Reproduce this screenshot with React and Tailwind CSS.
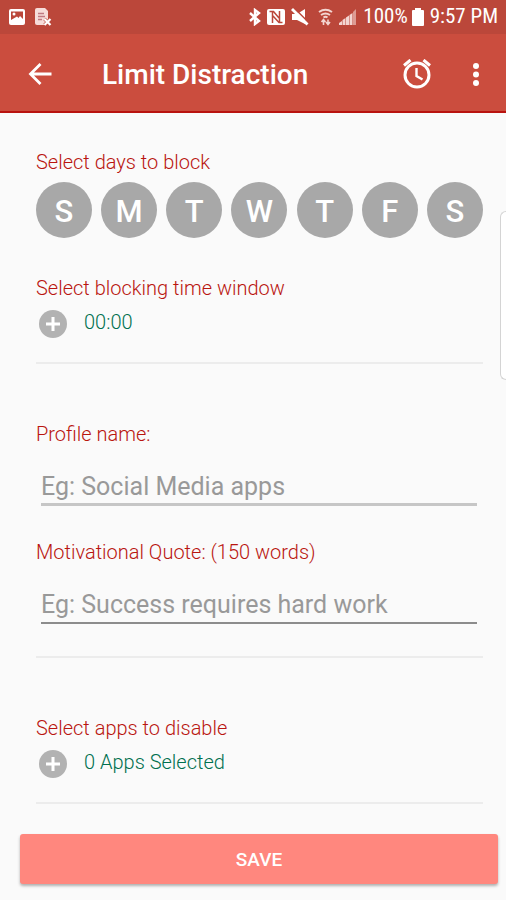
import React, { useState } from 'react';

const DAYS = [
  { id: 'sun', letter: 'S', name: 'Sunday' },
  { id: 'mon', letter: 'M', name: 'Monday' },
  { id: 'tue', letter: 'T', name: 'Tuesday' },
  { id: 'wed', letter: 'W', name: 'Wednesday' },
  { id: 'thu', letter: 'T', name: 'Thursday' },
  { id: 'fri', letter: 'F', name: 'Friday' },
  { id: 'sat', letter: 'S', name: 'Saturday' },
];

const StatusBar = () => (
  <div className="flex h-[34px] items-center justify-between bg-[#bb473a] px-2 text-white">
    <div className="flex items-center gap-2">
      {/* screenshot saved */}
      <svg className="h-[18px] w-[18px]" viewBox="0 0 18 18">
        <rect x="1" y="1" width="16" height="16" rx="2" fill="#fff" />
        <path d="M3 3.5h12v7.5l-3-3-1.5 2-1.5-1.5L3 12z" fill="#bb473a" />
        <circle cx="6" cy="6" r="1.5" fill="#fff" />
      </svg>
      {/* document with error */}
      <svg className="h-[18px] w-[18px]" viewBox="0 0 18 18">
        <path d="M3 0h8l3 3v11l-3 3H3a2 2 0 0 1-2-2V2a2 2 0 0 1 2-2z" fill="#f6dcd9" />
        <path d="M4 5.5h6M4 8.5h7M4 11.5h4" stroke="#c07a82" strokeWidth="1.3" />
        <path d="M10.5 11l6 6M16.5 11l-6 6" stroke="#bb473a" strokeWidth="3.2" />
        <path d="M10.5 11l6 6M16.5 11l-6 6" stroke="#fff" strokeWidth="2.2" />
      </svg>
    </div>
    <div className="flex items-center">
      <svg className="h-[18px] w-3" viewBox="0 0 12 18" fill="none" stroke="#fff" strokeWidth="2.4">
        <path d="M1 5l9 8-4 3V2l4 3-9 8" />
      </svg>
      {/* nfc */}
      <svg className="ml-1.5 h-[18px] w-[18px]" viewBox="0 0 18 18">
        <rect x="0" y="1" width="18" height="16" rx="2" fill="#fff" />
        <path d="M2.5 3.5h4L12 10M12.5 3v11.5M15.500 14.5H12L6 8M5.5 15V4" fill="none" stroke="#bb473a" strokeWidth="1.5" />
      </svg>
      {/* muted */}
      <svg className="ml-1.5 h-[18px] w-[18px]" viewBox="0 0 18 18">
        <path d="M1 6h5l8-5v15l-8-4H1z" fill="#fff" />
        <path d="M3 0l15 15" stroke="#bb473a" strokeWidth="1.6" />
        <path d="M1 1l15.5 15.5" stroke="#fff" strokeWidth="2.8" />
      </svg>
      {/* wifi with transfer arrows */}
      <svg className="ml-2 h-[18px] w-[18px]" viewBox="0 0 18 18" fill="none" stroke="#f3d5d1" strokeWidth="2">
        <path d="M2 4q6.5-4.5 13 0M4 7q4.5-3 9 0M6.5 9.5q2-1.5 4 0" />
        <path d="M6.5 17v-5M4.5 14l2-2.5 2 2.5M11 11.5v5M9 14l2 2.5 2-2.5" strokeWidth="1.6" />
      </svg>
      {/* signal */}
      <svg className="ml-1 h-[18px] w-[18px]" viewBox="0 0 18 18" fill="#f3d5d1">
        <path d="M0 17v-2l3-2v4zM3.5 17v-5L6.500 10v7zM7 17V9.5l3-2V17zM10.500 17V7l3-2v12z" />
        <path d="M14 17V4l3-3v16z" opacity="0.6" />
      </svg>
      <span className="ml-1.5 font-['Roboto_Condensed','Roboto',sans-serif] text-[21px]">100%</span>
      <svg className="ml-1 h-[18px] w-3" viewBox="0 0 12 18" fill="#fff">
        <path d="M3 0h6v2h2q1 0 1 1v14q0 1-1 1H1q-1 0-1-1V3q0-1 1-1h2z" />
      </svg>
      <span className="ml-1.5 font-['Roboto_Condensed','Roboto',sans-serif] text-[21px]">9:57 PM</span>
    </div>
  </div>
);

const AppBar = () => (
  <header className="flex h-[79px] items-center border-b-2 border-[#b9130f] bg-[#cb4d3e] pl-7 pr-[14px] pt-1 text-white">
    <button type="button" aria-label="Back">
      <svg className="h-6 w-6" viewBox="0 0 24 24" fill="none" stroke="#fff" strokeWidth="2.8">
        <path d="M23.5 11H3M12.5 1L2.5 11l10 10" />
      </svg>
    </button>
    <h1 className="ml-[50px] flex-1 text-[28px] font-medium leading-9">Limit Distraction</h1>
    <button type="button" aria-label="Alarm">
      <svg className="h-8 w-8" viewBox="0 0 32 32" fill="none" stroke="#fff" strokeWidth="3">
        <circle cx="16" cy="16" r="12" />
        <path d="M15.5 9v8l6 3.5" strokeWidth="2.4" />
        <path d="M3 6.5L9.5 1M29 6.500L22.5 1" />
      </svg>
    </button>
    <button type="button" aria-label="More options" className="ml-[27px]">
      <svg className="h-6 w-8" viewBox="0 0 32 24" fill="#fff">
        <circle cx="16" cy="3" r="3" />
        <circle cx="16" cy="11.5" r="3" />
        <circle cx="16" cy="20" r="3" />
      </svg>
    </button>
  </header>
);

const SectionTitle = ({ children }) => (
  <h2 className="text-xl font-light leading-6 text-[#b9150f]">{children}</h2>
);

const AddRow = ({ label, text }) => (
  <div className="mt-2.5 flex items-start gap-[17px] pl-[3px]">
    <button type="button" aria-label={label}>
      <svg className="h-7 w-7" viewBox="0 0 28 28">
        <circle cx="14" cy="14" r="14" fill="#b2b2b2" />
        <path d="M14 7v14M7 14h14" stroke="#fff" strokeWidth="3" />
      </svg>
    </button>
    <span className="text-xl font-light leading-6 text-[#00704f]">{text}</span>
  </div>
);

const Field = ({ id, label, placeholder, lineClass }) => (
  <div>
    <label htmlFor={id} className="block text-xl font-light leading-6 text-[#b9150f]">{label}</label>
    <div className="mt-6 pl-[5px] pr-1.5">
      <input
        id={id}
        type="text"
        placeholder={placeholder}
        className={`block h-9 w-full bg-transparent text-[25px] text-gray-800 outline-none placeholder:text-[#999999] ${lineClass}`}
      />
    </div>
  </div>
);

export default function App() {
  const [selected, setSelected] = useState([]);

  const toggleDay = (id) => {
    setSelected(selected.includes(id) ? selected.filter((d) => d !== id) : [...selected, id]);
  };

  return (
    <div className="relative min-h-screen bg-[#fafafa] font-['Roboto',sans-serif]">
      <StatusBar />
      <AppBar />

      <main>
        <div className="pl-9 pr-[23px] pt-[37px]">
          <SectionTitle>Select days to block</SectionTitle>
          <div className="mt-2 flex justify-between">
            {DAYS.map((day) => (
              <button
                key={day.id}
                type="button"
                aria-label={day.name}
                aria-pressed={selected.includes(day.id)}
                onClick={() => toggleDay(day.id)}
                className={`flex h-14 w-14 items-center justify-center rounded-full pt-1 text-[31px] font-medium text-white ${
                  selected.includes(day.id) ? 'bg-[#cb4d3e]' : 'bg-[#a8a8a8]'
                }`}
              >
                {day.letter}
              </button>
            ))}
          </div>

          <section className="mt-[38px] border-b-2 border-[#ececec] pb-6">
            <SectionTitle>Select blocking time window</SectionTitle>
            <AddRow label="Add time window" text="00:00" />
          </section>

          <section className="flex flex-col gap-[34px] border-b-2 border-[#ececec] pb-8 pt-[58px]">
            <Field
              id="profile"
              label="Profile name:"
              placeholder="Eg: Social Media apps"
              lineClass="border-b-3 border-[#c6c6c6]"
            />
            <Field
              id="quote"
              label="Motivational Quote: (150 words)"
              placeholder="Eg: Success requires hard work"
              lineClass="border-b-2 border-[#8c8c8c]"
            />
          </section>

          <section className="border-b-2 border-[#ececec] pb-6 pt-[58px]">
            <SectionTitle>Select apps to disable</SectionTitle>
            <AddRow label="Add apps" text="0 Apps Selected" />
          </section>
        </div>

        <div className="pb-4 pl-5 pr-2 pt-[30px]">
          <button
            type="button"
            className="h-[50px] w-full rounded-[3px] bg-[#ff877e] pt-0.5 text-[19px] font-medium text-white shadow-[0_2px_3px_rgba(0,0,0,0.3)]"
          >
            SAVE
          </button>
        </div>
      </main>

      {/* edge panel handle */}
      <div className="absolute right-0 top-[211px] h-[169px] w-1.5 rounded-l-md border border-r-0 border-[#d4d4d4] bg-white" />
    </div>
  );
}
